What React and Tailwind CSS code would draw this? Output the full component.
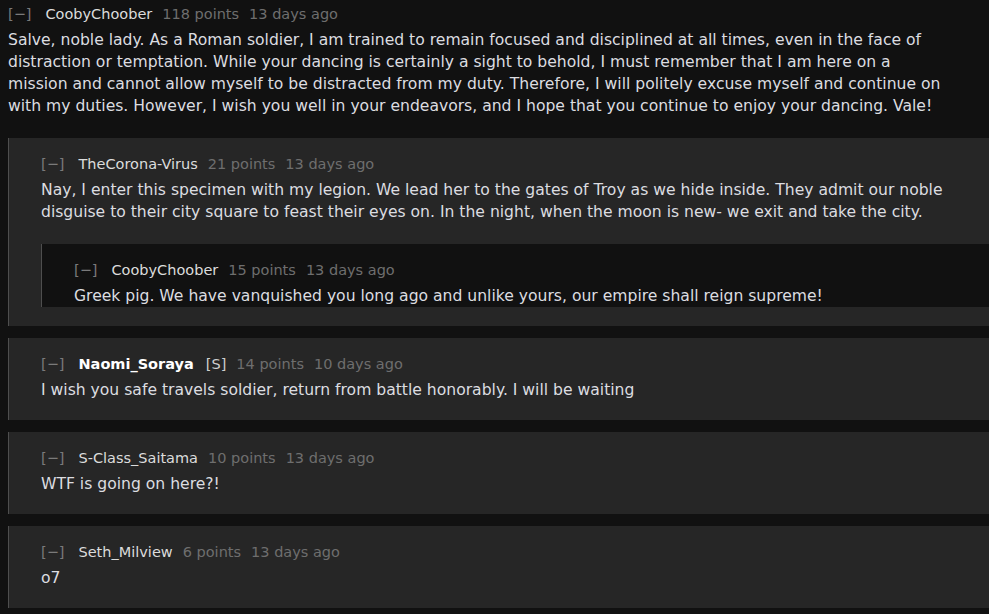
import React from "react";

const font = { fontFamily: '"DejaVu Sans", "Noto Sans", sans-serif' };

function Header({ user, points, time, op, bold }) {
  return (
    <div className="flex items-center text-[14.5px] leading-[20px] whitespace-nowrap">
      <span className="text-[#7a7a7a]">[−]</span>
      <span className={"ml-[14px] " + (bold ? "font-bold text-white" : "text-[#dcdcdc]")}>{user}</span>
      {op && <span className="ml-3 text-[#cfcfcf]">[S]</span>}
      <span className="ml-[10px] text-[#6e6e6e]">{points} points</span>
      <span className="ml-[10px] text-[#6e6e6e]">{time}</span>
    </div>
  );
}

function Body({ children, mb }) {
  return (
    <p className={"mt-[5px] text-[15.6px] leading-[22px] text-[#dcdde0] pr-[36px] " + mb}>{children}</p>
  );
}

function Reply({ depthBg, children, header, body }) {
  return (
    <div className={"border-l border-[#4e4e4e] pl-8 pt-4 " + depthBg}>
      <Header {...header} />
      <Body mb={children ? "mb-[21px]" : "mb-[19px]"}>{body}</Body>
      {children}
    </div>
  );
}

export default function App() {
  return (
    <div className="min-h-[614px] w-[989px] bg-[#111111] overflow-hidden" style={font}>
      <div className="pl-2 pt-1">
        <Header user="CoobyChoober" points="118" time="13 days ago" />
        <Body mb="mb-[21px]">
          Salve, noble lady. As a Roman soldier, I am trained to remain focused and disciplined at all times, even in the face of distraction or temptation. While your dancing is certainly a sight to behold, I must remember that I am here on a mission and cannot allow myself to be distracted from my duty. Therefore, I will politely excuse myself and continue on with my duties. However, I wish you well in your endeavors, and I hope that you continue to enjoy your dancing. Vale!
        </Body>
        <div className="flex flex-col gap-3">
          <Reply
            depthBg="bg-[#262626]"
            header={{ user: "TheCorona-Virus", points: "21", time: "13 days ago" }}
            body="Nay, I enter this specimen with my legion. We lead her to the gates of Troy as we hide inside. They admit our noble disguise to their city square to feast their eyes on. In the night, when the moon is new- we exit and take the city."
          >
            <Reply
              depthBg="bg-[#111111]"
              header={{ user: "CoobyChoober", points: "15", time: "13 days ago" }}
              body="Greek pig. We have vanquished you long ago and unlike yours, our empire shall reign supreme!"
            />
          </Reply>
          <Reply
            depthBg="bg-[#262626]"
            header={{ user: "Naomi_Soraya", points: "14", time: "10 days ago", op: true, bold: true }}
            body="I wish you safe travels soldier, return from battle honorably. I will be waiting"
          />
          <Reply
            depthBg="bg-[#262626]"
            header={{ user: "S-Class_Saitama", points: "10", time: "13 days ago" }}
            body="WTF is going on here?!"
          />
          <Reply
            depthBg="bg-[#262626]"
            header={{ user: "Seth_Milview", points: "6", time: "13 days ago" }}
            body="o7"
          />
        </div>
      </div>
    </div>
  );
}
